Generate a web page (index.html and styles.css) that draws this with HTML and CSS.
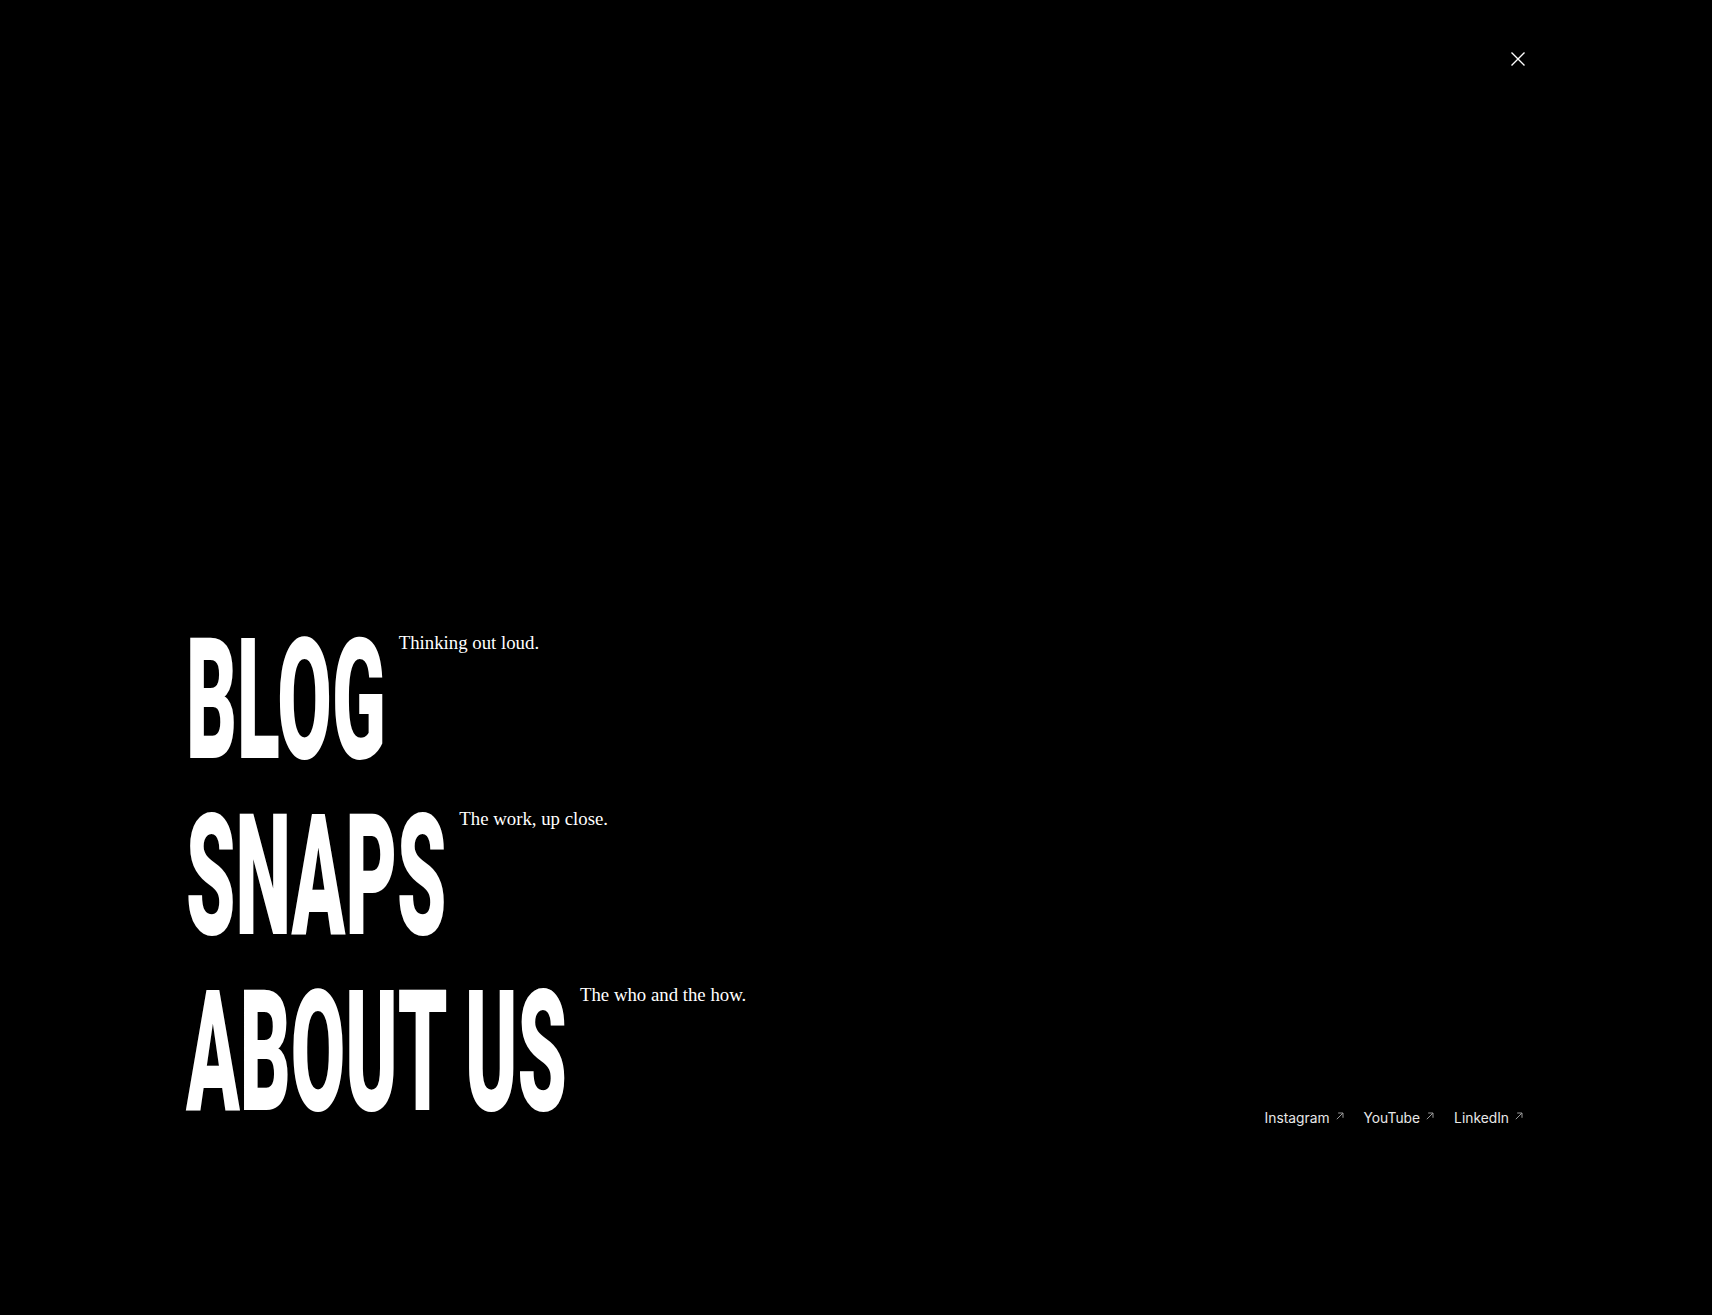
FILE: index.html
```html
<!DOCTYPE html>
<html lang="en">
<head>
<meta charset="utf-8">
<title>Menu</title>
<link rel="stylesheet" href="styles.css">
</head>
<body>
<div class="overlay">
  <header class="overlay-header">
    <button class="close-btn" aria-label="Close menu">
      <svg viewBox="0 0 16 16" width="16" height="16" aria-hidden="true">
        <path d="M1.5 1.5 L14.5 14.5 M14.5 1.5 L1.5 14.5" fill="none" stroke="#fff" stroke-width="1.4"/>
      </svg>
    </button>
  </header>
  <main class="overlay-main">
    <nav class="menu">
      <a class="menu-item" href="#">
        <span class="menu-title">BLOG</span>
        <span class="menu-desc">Thinking out loud.</span>
      </a>
      <a class="menu-item" href="#">
        <span class="menu-title">SNAPS</span>
        <span class="menu-desc">The work, up close.</span>
      </a>
      <a class="menu-item" href="#">
        <span class="menu-title">ABOUT US</span>
        <span class="menu-desc">The who and the how.</span>
      </a>
    </nav>
    <ul class="socials">
      <li><a href="#">Instagram<svg class="ext" viewBox="0 0 8 8" width="8" height="8" aria-hidden="true"><path d="M0.8 7.2 L7 1 M2.2 1 H7 V5.8" fill="none" stroke="currentColor" stroke-width="1"/></svg></a></li>
      <li><a href="#">YouTube<svg class="ext" viewBox="0 0 8 8" width="8" height="8" aria-hidden="true"><path d="M0.8 7.2 L7 1 M2.2 1 H7 V5.8" fill="none" stroke="currentColor" stroke-width="1"/></svg></a></li>
      <li><a href="#">LinkedIn<svg class="ext" viewBox="0 0 8 8" width="8" height="8" aria-hidden="true"><path d="M0.8 7.2 L7 1 M2.2 1 H7 V5.8" fill="none" stroke="currentColor" stroke-width="1"/></svg></a></li>
    </ul>
  </main>
</div>
</body>
</html>
```

FILE: styles.css
```css
html, body {
  margin: 0;
  padding: 0;
  background: #000;
  color: #fff;
}

.overlay {
  min-height: 100vh;
  box-sizing: border-box;
  padding: 0 186px;
  display: flex;
  flex-direction: column;
}

.overlay-header {
  display: flex;
  justify-content: flex-end;
  padding-top: 51px;
}

.close-btn {
  background: none;
  border: 0;
  padding: 0;
  margin: 0;
  width: 16px;
  height: 16px;
  cursor: pointer;
  display: block;
}

.close-btn svg {
  display: block;
}

.overlay-main {
  margin-top: auto;
  padding-bottom: 175px;
  display: flex;
  justify-content: space-between;
  align-items: flex-end;
}

.menu {
  display: flex;
  flex-direction: column;
}

.menu-item {
  display: flex;
  align-items: flex-start;
  height: 176px;
  color: #fff;
  text-decoration: none;
}

.menu-title {
  display: block;
  font-family: Roboto, "Liberation Sans", sans-serif;
  font-weight: 900;
  font-size: 79px;
  line-height: 1;
  white-space: nowrap;
  transform: translateY(5px) scaleY(2.14);
  transform-origin: 0 0;
}

.menu-desc {
  font-family: "Liberation Serif", serif;
  font-size: 18.8px;
  line-height: 1.2;
  margin-left: 13px;
  margin-top: 20px;
  white-space: nowrap;
}

.socials {
  list-style: none;
  margin: 0 3px 12px 0;
  padding: 0;
  display: flex;
  gap: 20px;
}

.socials a {
  font-family: Inter, "Noto Sans", sans-serif;
  font-size: 13.8px;
  line-height: 20px;
  color: #e8e8e8;
  text-decoration: none;
  display: flex;
  align-items: flex-start;
}

.socials .ext {
  color: #9a9a9a;
  margin-left: 6px;
  margin-top: 4px;
}
```
